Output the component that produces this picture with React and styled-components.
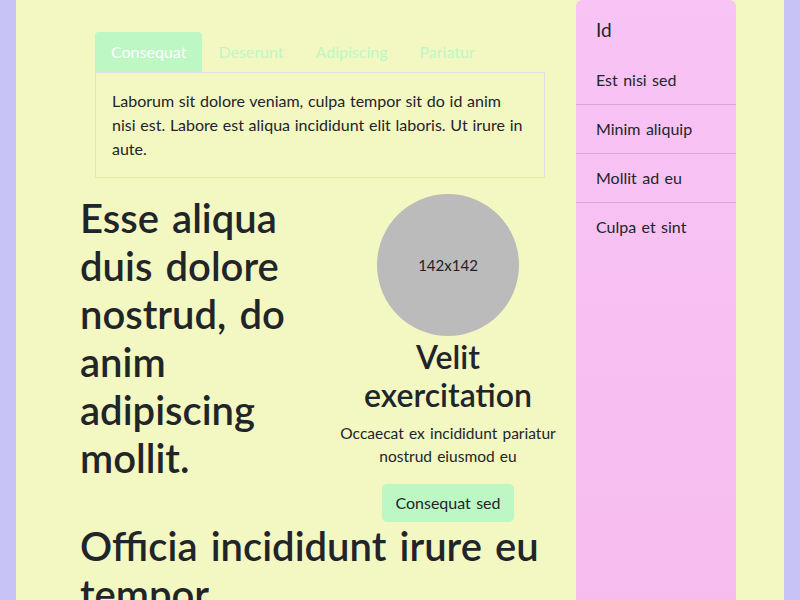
import React, { useState } from "react";
import styled, { createGlobalStyle } from "styled-components";

const GlobalStyle = createGlobalStyle`
  body {
    margin: 0;
    background: #c7c3f6;
    font-family: Lato, "Open Sans", sans-serif;
    color: #212529;
    -webkit-font-smoothing: antialiased;
  }

  h1, h2, p, button, div {
    word-spacing: 0.08em;
  }
`;

const tabs = [
  {
    label: "Consequat",
    text: "Laborum sit dolore veniam, culpa tempor sit do id anim nisi est. Labore est aliqua incididunt elit laboris. Ut irure in aute.",
  },
  { label: "Deserunt", text: "Deserunt mollit anim id est laborum." },
  { label: "Adipiscing", text: "Adipiscing elit sed do eiusmod tempor." },
  { label: "Pariatur", text: "Pariatur excepteur sint occaecat." },
];

const sideItems = ["Est nisi sed", "Minim aliquip", "Mollit ad eu", "Culpa et sint"];

export default function App() {
  const [active, setActive] = useState(0);

  return (
    <>
      <GlobalStyle />
      <Container>
        <Layout>
          <Main>
            <TabsBox>
              <TabList>
                {tabs.map((tab, i) => (
                  <Tab key={tab.label} $active={i === active} onClick={() => setActive(i)}>
                    {tab.label}
                  </Tab>
                ))}
              </TabList>
              <TabPane>
                <p>{tabs[active].text}</p>
              </TabPane>
            </TabsBox>

            <Hero>
              <BigHeading>Esse aliqua duis dolore nostrud, do anim adipiscing mollit.</BigHeading>
              <Feature>
                <Avatar>142x142</Avatar>
                <FeatureTitle>Velit exercitation</FeatureTitle>
                <FeatureText>Occaecat ex incididunt pariatur nostrud eiusmod eu</FeatureText>
                <Button>Consequat sed</Button>
              </Feature>
            </Hero>

            <BigHeading>Officia incididunt irure eu tempor</BigHeading>
          </Main>

          <Sidebar>
            <SideHeader>Id</SideHeader>
            {sideItems.map((item) => (
              <SideItem key={item}>{item}</SideItem>
            ))}
          </Sidebar>
        </Layout>
      </Container>
    </>
  );
}

const Container = styled.div`
  width: 768px;
  min-height: 100vh;
  margin: 0 auto;
  background: #f3f7c2;
`;

const Layout = styled.div`
  display: grid;
  grid-template-columns: 560px 160px;
  min-height: 100vh;
`;

const Main = styled.main`
  padding: 32px 16px 24px 64px;
`;

const TabsBox = styled.div`
  width: 450px;
  margin: 0 auto;
`;

const TabList = styled.div`
  display: flex;
`;

const Tab = styled.button`
  border: none;
  border-radius: 4px 4px 0 0;
  padding: 8px 16px;
  font-family: inherit;
  font-size: 16px;
  line-height: 24px;
  cursor: pointer;
  background: ${(props) => (props.$active ? "#bdf7c4" : "transparent")};
  color: ${(props) => (props.$active ? "#ffffff" : "#bdf7c4")};
`;

const TabPane = styled.div`
  border: 1px solid #dde1e6;
  padding: 16px;

  p {
    margin: 0;
    font-size: 16px;
    line-height: 24px;
    word-spacing: 0.04em;
  }
`;

const Hero = styled.section`
  display: grid;
  grid-template-columns: 240px 224px;
  gap: 16px;
  margin-top: 16px;
`;

const BigHeading = styled.h1`
  margin: 0;
  font-size: 40px;
  font-weight: 600;
  line-height: 48px;
`;

const Feature = styled.div`
  display: flex;
  flex-direction: column;
  align-items: center;
  text-align: center;
`;

const Avatar = styled.div`
  width: 142px;
  height: 142px;
  border-radius: 50%;
  background: #bbbbbb;
  display: flex;
  align-items: center;
  justify-content: center;
  font-size: 15px;
  color: #222;
`;

const FeatureTitle = styled.h2`
  margin: 2px 0 8px;
  font-size: 32px;
  font-weight: 600;
  line-height: 38px;
`;

const FeatureText = styled.p`
  margin: 0 0 16px;
  font-size: 15.5px;
  line-height: 23px;
`;

const Button = styled.button`
  border: 1px solid #bdf7c4;
  border-radius: 5px;
  background: #bdf7c4;
  color: #212529;
  padding: 6px 12px;
  font-family: inherit;
  font-size: 16px;
  line-height: 24px;
  cursor: pointer;
`;

const Sidebar = styled.aside`
  background: linear-gradient(#f8c4f5, #f6bcee);
  border-radius: 6px 6px 0 0;
`;

const SideHeader = styled.div`
  padding: 15px 20px 11px;
  font-size: 19px;
  line-height: 30px;
`;

const SideItem = styled.div`
  padding: 12px 20px;
  font-size: 16px;
  line-height: 24px;

  & + & {
    border-top: 1px solid rgba(0, 0, 0, 0.125);
  }
`;
